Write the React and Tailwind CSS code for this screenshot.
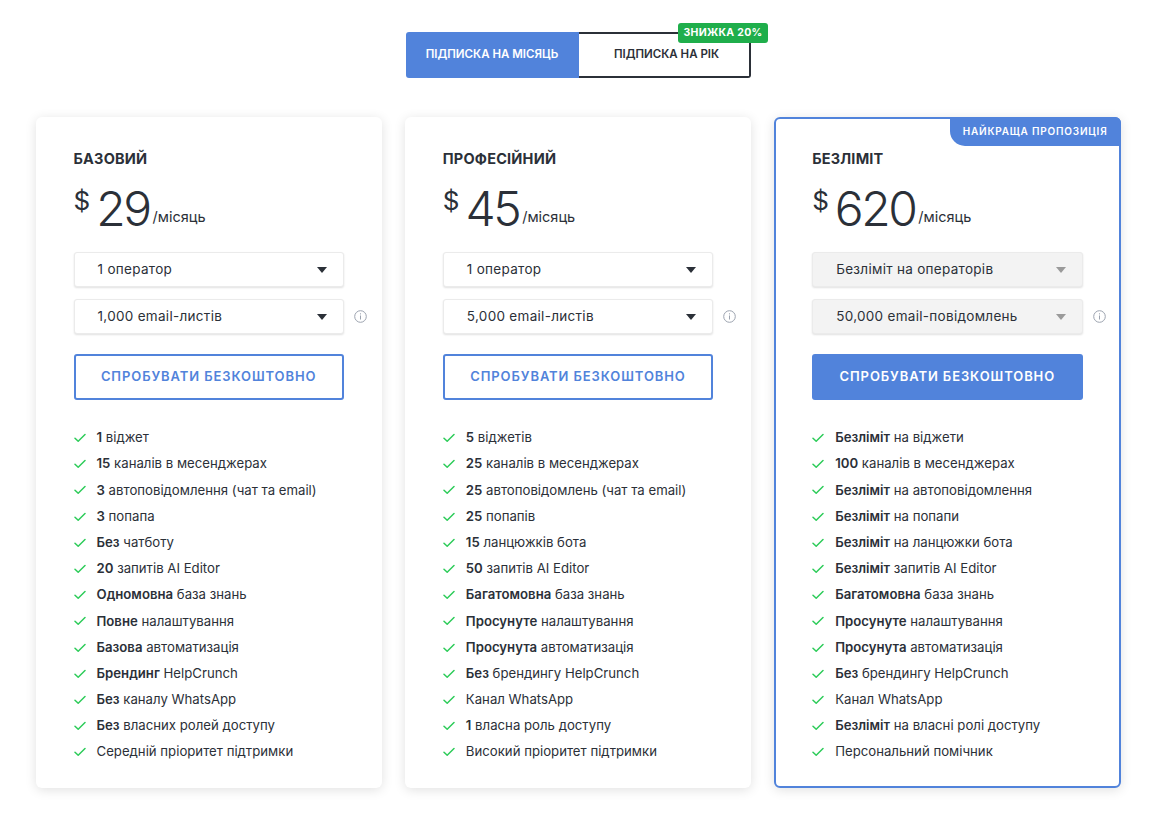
import React from "react";

const plans = [
  {
    title: "БАЗОВИЙ",
    price: "29",
    sel1: "1 оператор",
    sel2: "1,000 email-листів",
    featured: false,
    features: [
      ["1", " віджет"],
      ["15", " каналів в месенджерах"],
      ["3", " автоповідомлення (чат та email)"],
      ["3", " попапа"],
      ["Без", " чатботу"],
      ["20", " запитів AI Editor"],
      ["Одномовна", " база знань"],
      ["Повне", " налаштування"],
      ["Базова", " автоматизація"],
      ["Брендинг", " HelpCrunch"],
      ["Без", " каналу WhatsApp"],
      ["Без", " власних ролей доступу"],
      ["", "Середній пріоритет підтримки"],
    ],
  },
  {
    title: "ПРОФЕСІЙНИЙ",
    price: "45",
    sel1: "1 оператор",
    sel2: "5,000 email-листів",
    featured: false,
    features: [
      ["5", " віджетів"],
      ["25", " каналів в месенджерах"],
      ["25", " автоповідомлень (чат та email)"],
      ["25", " попапів"],
      ["15", " ланцюжків бота"],
      ["50", " запитів AI Editor"],
      ["Багатомовна", " база знань"],
      ["Просунуте", " налаштування"],
      ["Просунута", " автоматизація"],
      ["Без", " брендингу HelpCrunch"],
      ["", "Канал WhatsApp"],
      ["1", " власна роль доступу"],
      ["", "Високий пріоритет підтримки"],
    ],
  },
  {
    title: "БЕЗЛІМІТ",
    price: "620",
    sel1: "Безліміт на операторів",
    sel2: "50,000 email-повідомлень",
    featured: true,
    features: [
      ["Безліміт", " на віджети"],
      ["100", " каналів в месенджерах"],
      ["Безліміт", " на автоповідомлення"],
      ["Безліміт", " на попапи"],
      ["Безліміт", " на ланцюжки бота"],
      ["Безліміт", " запитів AI Editor"],
      ["Багатомовна", " база знань"],
      ["Просунуте", " налаштування"],
      ["Просунута", " автоматизація"],
      ["Без", " брендингу HelpCrunch"],
      ["", "Канал WhatsApp"],
      ["Безліміт", " на власні ролі доступу"],
      ["", "Персональний помічник"],
    ],
  },
];

function Check() {
  return (
    <svg width="12" height="10" viewBox="0 0 12 10" fill="none" className="shrink-0">
      <path d="M1 5.2L4.2 8.3L11 1.5" stroke="#2ecc5a" strokeWidth="1.5" strokeLinecap="round" strokeLinejoin="round" />
    </svg>
  );
}

function Info() {
  return (
    <svg width="13" height="13" viewBox="0 0 13 13" fill="none" className="shrink-0">
      <circle cx="6.5" cy="6.5" r="5.8" stroke="#9ca3af" strokeWidth="1" />
      <rect x="6" y="5.5" width="1" height="4" fill="#9ca3af" />
      <rect x="6" y="3.3" width="1" height="1.1" fill="#9ca3af" />
    </svg>
  );
}

function Select({ label, disabled }) {
  return (
    <div
      className={`flex h-[35px] w-full items-center justify-between rounded-[3px] border border-[#ebebeb] pl-[23px] pr-[16px] text-[13.5px] tracking-[0.3px] text-[#2b3038] shadow-[0_1px_2px_rgba(0,0,0,0.12)] ${
        disabled ? "bg-[#f3f3f3]" : "bg-white"
      }`}
    >
      <span>{label}</span>
      <svg width="10" height="6" viewBox="0 0 10 6">
        <path d="M0 0H10L5 6Z" fill={disabled ? "#9a9a9a" : "#2b3038"} />
      </svg>
    </div>
  );
}

function Card({ plan }) {
  return (
    <div
      className={`relative flex flex-col rounded-[6px] bg-white pb-[21px] shadow-[0_2px_12px_rgba(0,0,0,0.12)] ${
        plan.featured ? "border-2 border-[#5183db] pl-[36px] pr-[36px] pt-[30px]" : "pl-[38px] pr-[38px] pt-[32px]"
      }`}
    >
      {plan.featured && (
        <div className="absolute right-[-2px] top-[-2px] flex h-[29px] items-center rounded-bl-[15px] rounded-tr-[6px] bg-[#5183db] pl-[13px] pr-[13px] text-[10px] font-semibold tracking-[0.8px] text-white">
          НАЙКРАЩА ПРОПОЗИЦІЯ
        </div>
      )}
      <div className="h-[20px] text-[14.5px] font-bold leading-[20px] tracking-[0.2px] text-[#2b3038]">{plan.title}</div>
      <div className="mt-[16px] flex items-start text-[#2b3038]">
        <span className="mt-[3px] text-[26px] leading-[26px]">$</span>
        <span className="ml-[6px] text-[48px] font-light leading-[48px] tracking-[-2.5px]">{plan.price}</span>
        <span className="ml-[3px] mt-[22px] text-[14.5px] leading-[20px]">/місяць</span>
      </div>
      <div className="mt-[19px]">
        <Select label={plan.sel1} disabled={plan.featured} />
      </div>
      <div className="mr-[-23px] mt-[12px] flex items-center gap-[10px]">
        <Select label={plan.sel2} disabled={plan.featured} />
        <Info />
      </div>
      <button
        className={`mt-[20px] flex h-[46px] w-full items-center justify-center rounded-[3px] text-[13px] font-semibold tracking-[0.9px] ${
          plan.featured ? "bg-[#5183db] text-white" : "border-2 border-[#5183db] bg-white text-[#5183db]"
        }`}
      >
        СПРОБУВАТИ БЕЗКОШТОВНО
      </button>
      <ul className="mt-[25px] flex flex-col">
        {plan.features.map(([b, r], i) => (
          <li key={i} className="flex h-[26.2px] items-center gap-[11px] text-[13.2px] text-[#2b3038]">
            <Check />
            <span>
              {b && <b className="font-semibold">{b}</b>}
              {r}
            </span>
          </li>
        ))}
      </ul>
    </div>
  );
}

export default function App() {
  return (
    <div className="min-h-[826px] bg-white pt-[32px]" style={{ fontFamily: "Inter, 'Noto Sans', sans-serif" }}>
      <div className="w-[1156px]">
        <div className="mx-auto flex w-[345px]">
          <button className="flex h-[46px] w-[173px] items-center justify-center rounded-l-[3px] bg-[#5183db] text-[11.5px] font-semibold text-white">
            ПІДПИСКА НА МІСЯЦЬ
          </button>
          <div className="relative flex-1">
            <button className="flex h-[46px] w-full items-center justify-center rounded-r-[3px] border-2 border-l-0 border-[#2b3038] bg-white pl-[6px] text-[11.5px] font-semibold text-[#2b3038]">
              ПІДПИСКА НА РІК
            </button>
            <div className="absolute right-[-17px] top-[-9px] flex h-[20px] items-center rounded-[3px] bg-[#1fae4b] px-[5px] text-[10.5px] font-bold tracking-[0.3px] text-white">
              ЗНИЖКА 20%
            </div>
          </div>
        </div>
        <div className="mx-auto mt-[39px] grid w-[1085px] grid-cols-3 gap-[23px]">
          {plans.map((p) => (
            <Card key={p.title} plan={p} />
          ))}
        </div>
      </div>
    </div>
  );
}
